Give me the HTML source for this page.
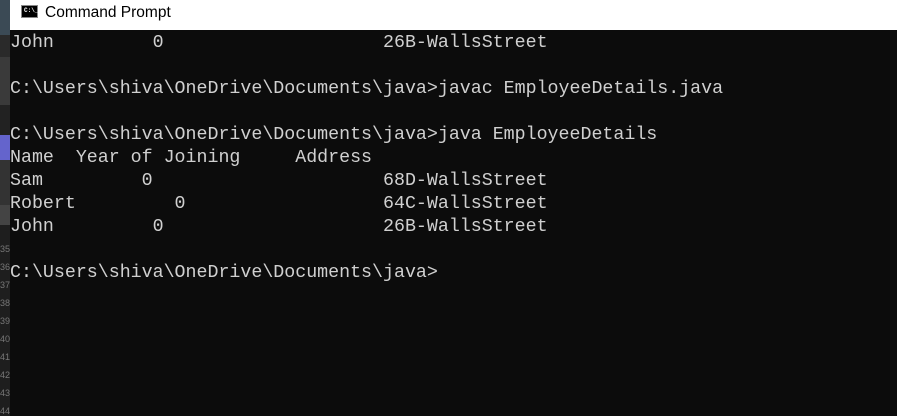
<!DOCTYPE html>
<html><head><meta charset="utf-8"><style>
html,body{margin:0;padding:0;width:897px;height:416px;overflow:hidden;background:#0c0c0c;position:relative}
.strip{position:absolute;left:0;top:0;width:10px;height:416px;background:#1e1e1e}
.strip div{position:absolute;left:0;width:10px}
.title{position:absolute;left:10px;top:0;width:887px;height:30px;background:#fff}
.title span{position:absolute;left:35px;top:4px;font:15.5px "Liberation Sans",sans-serif;color:#000}
.icon{position:absolute;left:11px;top:5px;width:17px;height:13px;background:#000;border:1px solid #888;box-sizing:border-box}
.icon i{position:absolute;left:2px;top:2px;font:bold 6px "Liberation Mono",monospace;color:#fff;font-style:normal;line-height:6px}
pre{position:absolute;left:10px;top:32px;margin:0;font:18.3px/23px "Liberation Mono",monospace;color:#d0d0d0}
.num{position:absolute;left:0;font:9px "Liberation Sans",sans-serif;color:#777}
</style></head><body>
<div class="strip">
<div style="top:0;height:35px;background:#3b4a55"></div>
<div style="top:35px;height:22px;background:#2a2a2a"></div>
<div style="top:57px;height:48px;background:#3a3a3a"></div>
<div style="top:105px;height:30px;background:#222"></div>
<div style="top:135px;height:25px;background:#6464cc"></div>
<div style="top:160px;height:45px;background:#333"></div>
<div style="top:205px;height:20px;background:#444"></div>
<span class="num" style="top:244px">35</span><span class="num" style="top:262px">36</span><span class="num" style="top:280px">37</span><span class="num" style="top:298px">38</span><span class="num" style="top:316px">39</span><span class="num" style="top:334px">40</span><span class="num" style="top:352px">41</span><span class="num" style="top:370px">42</span><span class="num" style="top:388px">43</span><span class="num" style="top:406px">44</span>
</div>
<div class="title"><div class="icon"><i>C:\_</i></div><span>Command Prompt</span></div>
<pre>John         0                    26B-WallsStreet

C:\Users\shiva\OneDrive\Documents\java>javac EmployeeDetails.java

C:\Users\shiva\OneDrive\Documents\java>java EmployeeDetails
Name  Year of Joining     Address
Sam         0                     68D-WallsStreet
Robert         0                  64C-WallsStreet
John         0                    26B-WallsStreet

C:\Users\shiva\OneDrive\Documents\java></pre>
</body></html>
